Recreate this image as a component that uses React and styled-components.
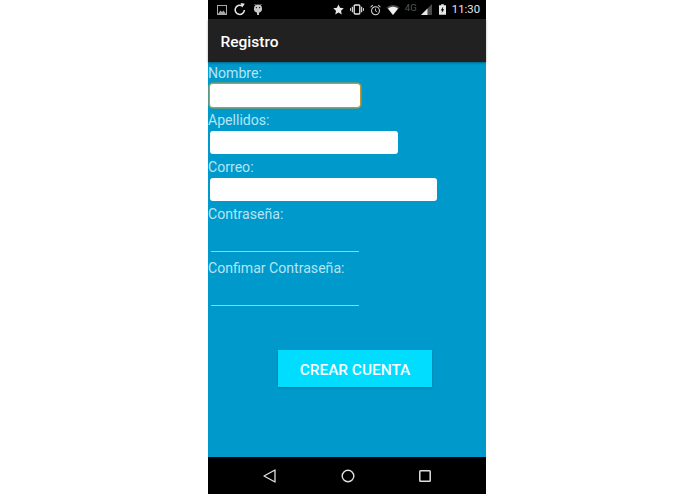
import styled, { createGlobalStyle } from "styled-components";

const GlobalStyle = createGlobalStyle`
  html, body {
    margin: 0;
    padding: 0;
    background: #ffffff;
    font-family: Roboto, "Liberation Sans", sans-serif;
  }
`;

function App() {
  return (
    <Page>
      <GlobalStyle />
      <Phone>
        <StatusBar>
          <IconGroup>
            <PictureIcon />
            <RefreshIcon />
            <AndroidIcon />
          </IconGroup>
          <IconGroupRight>
            <StarIcon />
            <Slot $left={6}><VibrateIcon /></Slot>
            <Slot $left={6}><AlarmIcon /></Slot>
            <Slot $left={5}><WifiIcon /></Slot>
            <NetworkType>4G</NetworkType>
            <Slot $left={4}><SignalIcon /></Slot>
            <Slot $left={7}><BatteryIcon /></Slot>
            <Clock>11:30</Clock>
          </IconGroupRight>
        </StatusBar>
        <AppBar>Registro</AppBar>
        <Form>
          <Label>Nombre:</Label>
          <TextField $width={150} $focused />
          <Label>Apellidos:</Label>
          <TextField $width={188} />
          <Label>Correo:</Label>
          <TextField $width={227} />
          <Label>Contraseña:</Label>
          <PasswordField type="password" />
          <Label>Confimar Contraseña:</Label>
          <PasswordField type="password" />
          <SubmitButton>CREAR CUENTA</SubmitButton>
        </Form>
        <NavBar>
          <svg width="13" height="14" viewBox="0 0 13 14">
            <path d="M12 1 L1 7 L12 13 Z" fill="none" stroke="#e0e0e0" strokeWidth="1.3" strokeLinejoin="round" />
          </svg>
          <svg width="14" height="14" viewBox="0 0 14 14">
            <circle cx="7" cy="7" r="5.8" fill="none" stroke="#e0e0e0" strokeWidth="1.4" />
          </svg>
          <svg width="12" height="12" viewBox="0 0 12 12">
            <rect x="0.8" y="0.8" width="10.4" height="10.4" rx="0.8" fill="none" stroke="#e0e0e0" strokeWidth="1.5" />
          </svg>
        </NavBar>
      </Phone>
    </Page>
  );
}

function PictureIcon() {
  return (
    <svg width="10" height="10" viewBox="0 0 10 10">
      <rect x="0.5" y="0.5" width="9" height="9" fill="none" stroke="#a8a8a8" strokeWidth="1" />
      <path d="M1 9 L3.5 5.5 L5 7 L6.5 5.5 L9 9 Z" fill="#a8a8a8" />
    </svg>
  );
}

function RefreshIcon() {
  return (
    <svg width="12" height="13" viewBox="0 0 12 13">
      <path d="M8 2.8 A4.6 4.6 0 1 0 10.4 7" fill="none" stroke="#e8e8e8" strokeWidth="1.5" />
      <path d="M6.6 0 L10.8 0.8 L8.2 4.6 Z" fill="#e8e8e8" />
    </svg>
  );
}

function AndroidIcon() {
  return (
    <svg width="10" height="12" viewBox="0 0 10 12">
      <path d="M1 4.5 A4 4 0 0 1 9 4.5 L9 6 A4 4 0 0 1 6 8.8 L6 11 L4 11 L4 8.8 A4 4 0 0 1 1 6 Z" fill="#c8c8c8" />
      <path d="M2.5 1.2 L1.6 0 M7.5 1.2 L8.4 0" stroke="#c8c8c8" strokeWidth="0.8" />
      <circle cx="3.4" cy="3.6" r="0.6" fill="#000" />
      <circle cx="6.6" cy="3.6" r="0.6" fill="#000" />
    </svg>
  );
}

function StarIcon() {
  return (
    <svg width="11" height="11" viewBox="0 0 24 24">
      <path d="M12 1 L15.4 8.4 L23.5 9.3 L17.5 14.8 L19.1 22.8 L12 18.8 L4.9 22.8 L6.5 14.8 L0.5 9.3 L8.6 8.4 Z" fill="#e8e8e8" />
    </svg>
  );
}

function VibrateIcon() {
  return (
    <svg width="14" height="11" viewBox="0 0 15 11">
      <rect x="4.5" y="0.7" width="6" height="9.6" rx="1" fill="none" stroke="#e8e8e8" strokeWidth="1.4" />
      <path d="M2.5 2.5 V8.5 M12.5 2.5 V8.5" stroke="#e8e8e8" strokeWidth="1.2" />
      <path d="M0.5 4 V7 M14.5 4 V7" stroke="#e8e8e8" strokeWidth="1" />
    </svg>
  );
}

function AlarmIcon() {
  return (
    <svg width="11" height="12" viewBox="0 0 12 12">
      <circle cx="6" cy="6.8" r="4.3" fill="none" stroke="#dcdcdc" strokeWidth="1.1" />
      <path d="M6 4.4 V7 L7.8 8" fill="none" stroke="#dcdcdc" strokeWidth="0.9" />
      <path d="M0.6 3 L3 0.8 M11.4 3 L9 0.8" stroke="#dcdcdc" strokeWidth="1.1" />
    </svg>
  );
}

function WifiIcon() {
  return (
    <svg width="14" height="10" viewBox="0 0 13 10">
      <path d="M0 2.6 A9.5 9.5 0 0 1 13 2.6 L6.5 10 Z" fill="#4d4d4d" />
      <path d="M1.5 3.6 A7.5 7.5 0 0 1 11.5 3.6 L6.5 10 Z" fill="#f0f0f0" />
    </svg>
  );
}

function SignalIcon() {
  return (
    <svg width="11" height="11" viewBox="0 0 11 11">
      <path d="M11 0 V11 H0 Z" fill="#4a4a4a" />
      <path d="M6.5 4.5 V11 H0 Z" fill="#e8e8e8" />
    </svg>
  );
}

function BatteryIcon() {
  return (
    <svg width="7" height="11" viewBox="0 0 8 12">
      <path d="M2.5 0 H5.5 V1 H8 V12 H0 V1 H2.5 Z" fill="#e8e8e8" />
      <path d="M4.8 2.6 L2 7 H3.6 L3 10 L6 5.8 H4.4 Z" fill="#000" />
    </svg>
  );
}

const Page = styled.div`
  display: flex;
  justify-content: center;
  width: 695px;
  height: 494px;
  overflow: hidden;
  padding-right: 1px;
  box-sizing: border-box;
`;

const Phone = styled.div`
  display: flex;
  flex-direction: column;
  width: 278px;
  height: 494px;
  background: #0099cc;
`;

const StatusBar = styled.div`
  display: flex;
  align-items: center;
  justify-content: space-between;
  flex: 0 0 19px;
  padding: 0 6px 0 9px;
  background: #000000;
`;

const IconGroup = styled.div`
  display: flex;
  align-items: center;
  gap: 7px;
`;

const IconGroupRight = styled.div`
  display: flex;
  align-items: center;
`;

const Slot = styled.span`
  display: flex;
  margin-left: ${(props) => props.$left}px;
`;

const NetworkType = styled.span`
  width: 12px;
  margin: -4px 0 0 5px;
  font-size: 9.5px;
  line-height: 10px;
  color: #555555;
`;

const Clock = styled.span`
  margin-left: 6px;
  font-size: 11.3px;
  line-height: 14px;
  color: #e8e8e8;
`;

const AppBar = styled.div`
  display: flex;
  align-items: center;
  flex: 0 0 43px;
  padding: 3px 0 0 12.5px;
  box-sizing: border-box;
  background: #212121;
  box-shadow: 0 1px 2px rgba(0, 0, 0, 0.35);
  color: #ffffff;
  font-size: 15.5px;
  font-weight: 500;
`;

const Form = styled.div`
  display: flex;
  flex: 1;
  flex-direction: column;
  align-items: flex-start;
  padding-top: 1px;
`;

const Label = styled.div`
  height: 21px;
  color: #b3e5f5;
  font-size: 14.1px;
  line-height: 21px;
`;

const TextField = styled.div`
  width: ${(props) => props.$width}px;
  height: 23px;
  margin: 0 0 3px 2px;
  border-radius: 3px;
  background: #ffffff;
  box-shadow: ${(props) =>
    props.$focused ? "0 0 0 1.5px #b59a3c" : "none"};
`;

const PasswordField = styled.input`
  display: block;
  width: 148px;
  height: 27px;
  margin: 0 0 6px 3px;
  padding: 0;
  box-sizing: border-box;
  border: none;
  border-bottom: 1px solid #8fd3ec;
  outline: none;
  background: transparent;
`;

const SubmitButton = styled.button`
  align-self: flex-start;
  width: 154px;
  height: 37px;
  margin: 38px 0 0 70px;
  padding: 2px 0 0;
  border: none;
  background: #00ddff;
  box-shadow: 0 1px 2px rgba(0, 0, 0, 0.25);
  color: #ffffff;
  font-family: Roboto, "Liberation Sans", sans-serif;
  font-size: 15.4px;
  font-weight: 500;
`;

const NavBar = styled.div`
  display: flex;
  align-items: center;
  flex: 0 0 37px;
  justify-content: space-between;
  padding: 0 55px;
  background: #000000;
`;

export default App;
